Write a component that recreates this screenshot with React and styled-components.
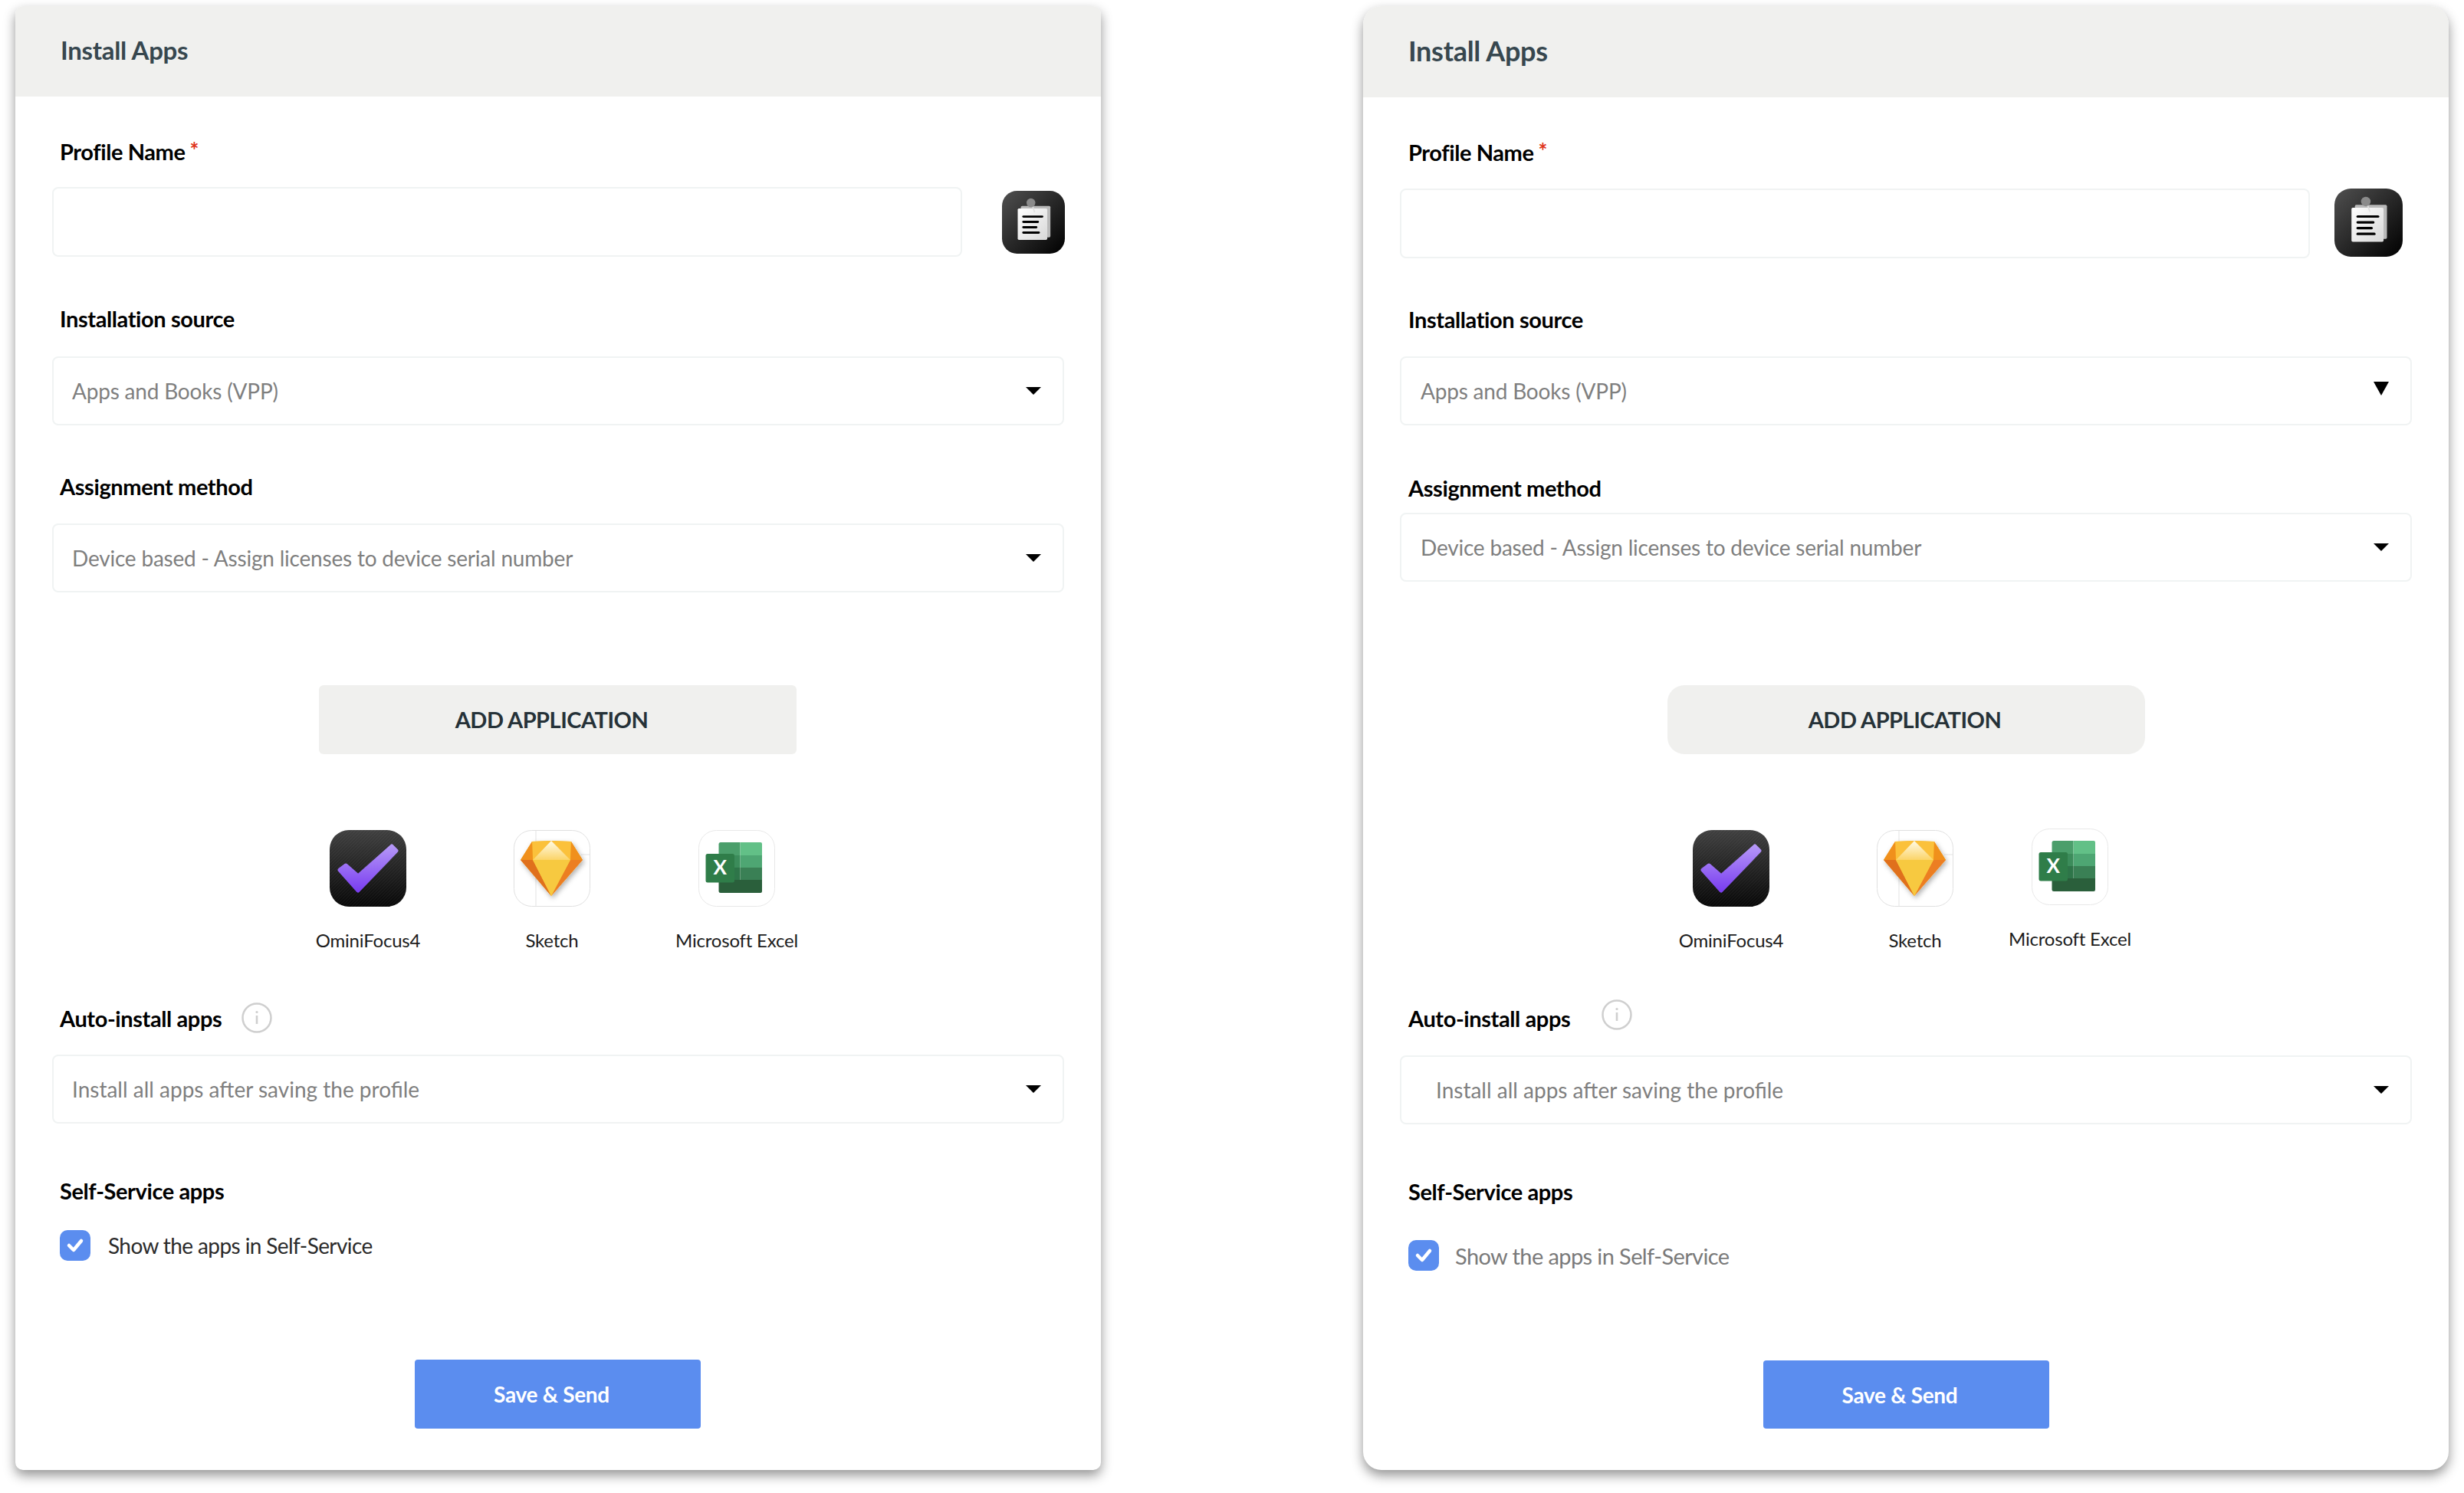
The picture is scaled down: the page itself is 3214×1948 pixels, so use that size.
import React from 'react'
import styled, {createGlobalStyle} from 'styled-components'

const GlobalStyle = createGlobalStyle`
html, body {
  margin: 0;
  padding: 0;
  background: #fff;
}
body {
  font-family: Lato, "Open Sans", sans-serif;
  -webkit-font-smoothing: antialiased;
}
`;

const Page = styled.div`
width: 3214px;
height: 1948px;
box-sizing: border-box;
padding: 8px 20px 0;
display: flex;
justify-content: space-between;
align-items: flex-start;
overflow: hidden;
`;
const Card = styled.section`
width: 1416px;
height: 1910px;
background: #fff;
border-radius: ${p => p.$radius}px;
box-shadow: rgba(0, 0, 0, 0.42) 0 7px 15px 0;
overflow: hidden;
display: flex;
flex-direction: column;
align-items: stretch;
`;
const Header = styled.header`
height: ${p => p.$height}px;
flex-shrink: 0;
background: #f0f0ee;
display: flex;
align-items: center;
padding-left: ${p => p.$left}px;
padding-bottom: 4px;
box-sizing: border-box;
`;
const Title = styled.h1`
margin: 0;
font-size: ${p => p.$size}px;
font-weight: 700;
color: #37474f;
letter-spacing: -0.3px;
`;
const Label = styled.div`
margin-top: ${p => p.$top}px;
margin-left: ${p => p.$left}px;
height: 34px;
line-height: 34px;
font-size: 29px;
font-weight: 700;
color: #000;
letter-spacing: -0.4px;
display: flex;
align-items: center;
`;
const Star = styled.span`
color: #e0341c;
margin-left: 6px;
margin-top: -6px;
font-size: 28px;
`;
const Row = styled.div`
margin-top: ${p => p.$top}px;
margin-left: ${p => p.$left}px;
display: flex;
align-items: center;
`;
const Field = styled.div`
width: ${p => p.$width}px;
height: ${p => p.$height}px;
box-sizing: border-box;
border: 2px solid #f0f3f3;
border-radius: 8px;
background: #fff;
display: flex;
align-items: center;
justify-content: space-between;
padding-left: ${p => p.$pad}px;
padding-right: ${p => p.$arrowRight}px;
font-size: 28px;
letter-spacing: ${p => p.$spacing ?? -0.2}px;
color: #7f7f7f;
flex-shrink: 0;
`;
const Arrow = styled.span`
width: 0;
height: 0;
margin-top: ${p => p.$shift}px;
border-left: ${p => p.$w / 2}px solid transparent;
border-right: ${p => p.$w / 2}px solid transparent;
border-top: ${p => p.$h}px solid #000;
`;
const ClipIcon = styled.svg`
width: ${p => p.$size}px;
height: ${p => p.$size}px;
margin-left: ${p => p.$left}px;
margin-top: ${p => p.$shift}px;
flex-shrink: 0;
`;
const AddButton = styled.button`
margin-top: ${p => p.$top}px;
margin-left: ${p => p.$left}px;
width: 623px;
height: 90px;
border: none;
background: #f0f0ee;
border-radius: ${p => p.$radius}px;
font-family: Lato, sans-serif;
font-size: 29px;
font-weight: 700;
color: #263238;
letter-spacing: -0.5px;
padding: 0 ${p => p.$shiftText}px 2px 0;
`;
const AppsRow = styled.div`
margin-top: ${p => p.$top}px;
margin-left: ${p => p.$left}px;
display: flex;
align-items: flex-start;
`;
const AppTile = styled.div`
width: 200px;
margin-left: ${p => p.$gap}px;
margin-top: ${p => p.$lift}px;
display: flex;
flex-direction: column;
align-items: center;
`;
const AppIcon = styled.svg`
width: 100px;
height: 100px;
display: block;
`;
const AppName = styled.div`
margin-top: ${p => p.$top}px;
height: 30px;
line-height: 30px;
font-size: 24px;
letter-spacing: -0.2px;
color: #1c1c1c;
white-space: nowrap;
`;
const InfoIcon = styled.svg`
width: 40px;
height: 40px;
margin-left: ${p => p.$left}px;
margin-top: ${p => p.$shift}px;
`;
const CheckRow = styled.div`
margin-top: ${p => p.$top}px;
margin-left: ${p => p.$left}px;
display: flex;
align-items: center;
`;
const CheckBox = styled.span`
width: 40px;
height: 40px;
border-radius: 10px;
background: #5b8def;
display: flex;
align-items: center;
justify-content: center;
`;
const CheckText = styled.span`
margin-left: ${p => p.$gap}px;
font-size: ${p => p.$size}px;
letter-spacing: ${p => p.$spacing}px;
color: ${p => p.$color};
`;
const SaveButton = styled.button`
margin-top: ${p => p.$top}px;
margin-left: ${p => p.$left}px;
width: 373px;
height: ${p => p.$height}px;
border: none;
border-radius: 4px;
background: #5b8def;
color: #fff;
font-family: Lato, sans-serif;
font-size: 28px;
font-weight: 700;
letter-spacing: -0.3px;
padding: 0 ${p => p.$shiftText}px 0 0;
`;

const ClipboardGlyph = ({size, left, shift, id}) => (
    <ClipIcon $size={size} $left={left} $shift={shift} viewBox='0 0 100 100'>
        <defs>
            <linearGradient id={id} x1='0' y1='0' x2='1' y2='1'>
                <stop offset='0' stopColor='#505050'/>
                <stop offset='1' stopColor='#000'/>
            </linearGradient>
            <linearGradient id={id + 'p'} x1='0' y1='0' x2='1' y2='1'>
                <stop offset='0' stopColor='#fff'/>
                <stop offset='1' stopColor='#d8d8d8'/>
            </linearGradient>
        </defs>
        <rect width='100' height='100' rx='24' fill={`url(#${id})`}/>
        <rect x='30' y='24' width='47' height='50' rx='2' fill='#b9b9b9'/>
        <rect x='25' y='28' width='47' height='50' rx='2' fill={`url(#${id + 'p'})`}/>
        <path d='M47 20L52 34' stroke='#e0e0e0' strokeWidth='2'/>
        <circle cx='46' cy='19' r='7' fill='#8b8b8b'/>
        <g stroke='#000' strokeWidth='3.6' strokeLinecap='round'>
            <path d='M34 41H64'/>
            <path d='M34 49.5H57'/>
            <path d='M34 58H54.5'/>
            <path d='M34 66.5H58.5'/>
        </g>
    </ClipIcon>
)

const OmniGlyph = ({id}) => (
    <AppIcon viewBox='0 0 100 100'>
        <defs>
            <linearGradient id={id} x1='0' y1='0' x2='0' y2='1'>
                <stop offset='0' stopColor='#3f3f3f'/>
                <stop offset='1' stopColor='#070707'/>
            </linearGradient>
            <linearGradient id={id + 'c'} x1='0' y1='0' x2='0' y2='1'>
                <stop offset='0' stopColor='#b597f7'/>
                <stop offset='1' stopColor='#7a3ef0'/>
            </linearGradient>
            <pattern id={id + 'h'} width='3' height='3' patternUnits='userSpaceOnUse' patternTransform='rotate(45)'>
                <rect width='1' height='3' fill='#ffffff' opacity='0.05'/>
            </pattern>
        </defs>
        <rect width='100' height='100' rx='25' fill={`url(#${id})`}/>
        <rect width='100' height='100' rx='25' fill={`url(#${id + 'h'})`}/>
        <polygon points='13,52 21,46 37,60 81,21 87,27 37,79' fill={`url(#${id + 'c'})`} stroke={`url(#${id + 'c'})`} strokeWidth='5' strokeLinejoin='round'/>
    </AppIcon>
)

const SketchGlyph = ({id}) => (
    <AppIcon viewBox='0 0 100 100'>
        <defs>
            <linearGradient id={id} x1='0' y1='0' x2='0' y2='1'>
                <stop offset='0' stopColor='#fffbe8'/>
                <stop offset='1' stopColor='#fbd468'/>
            </linearGradient>
            <filter id={id + 's'} x='-20%' y='-20%' width='140%' height='140%'>
                <feDropShadow dx='2' dy='3' stdDeviation='3' floodColor='#000' floodOpacity='0.3'/>
            </filter>
        </defs>
        <rect x='0.5' y='0.5' width='99' height='99' rx='23' fill='#fff' stroke='#e0e0e0'/>
        <path d='M29 1V99M88 32H99.5' stroke='#e3e3e3' strokeWidth='1'/>
        <g filter={`url(#${id + 's'})`}>
            <polygon points='24,15 49,14 75,15 90,39 49,86 9,39' fill='#f7b52e'/>
            <polygon points='24,15 49,14 25,39' fill='#fbc13a'/>
            <polygon points='75,15 49,14 74,39' fill='#fbc13a'/>
            <polygon points='24,15 9,39 25,39' fill='#f0901c'/>
            <polygon points='75,15 90,39 74,39' fill='#f0901c'/>
            <polygon points='49,14 25,39 74,39' fill={`url(#${id})`}/>
            <polygon points='9,39 25,39 49,86' fill='#e0701a'/>
            <polygon points='90,39 74,39 49,86' fill='#ec7e24'/>
            <polygon points='25,39 74,39 49,86' fill='#f7c93f'/>
        </g>
    </AppIcon>
)

const ExcelGlyph = () => (
    <AppIcon viewBox='0 0 100 100'>
        <rect x='0.5' y='0.5' width='99' height='99' rx='23' fill='#fff' stroke='#e8e8e8'/>
        <path d='M29 16H54.5V33H26.5V18.5A2.5 2.5 0 0 1 29 16Z' fill='#4b9e6b'/>
        <path d='M54.5 16H81A2 2 0 0 1 83 18V33H54.5Z' fill='#62c087'/>
        <rect x='26.5' y='33' width='28' height='16' fill='#3c8c5b'/>
        <rect x='54.5' y='33' width='28.5' height='16' fill='#4ea673'/>
        <rect x='26.5' y='49' width='28' height='16' fill='#2e7549'/>
        <rect x='54.5' y='49' width='28.5' height='16' fill='#3a8055'/>
        <path d='M26.5 65H83V80A2 2 0 0 1 81 82H29A2.5 2.5 0 0 1 26.5 79.5Z' fill='#2a5f3b'/>
        <rect x='9.5' y='31' width='37.5' height='37.5' rx='2.5' fill='#2f7d49'/>
        <text x='28.2' y='58' textAnchor='middle' fontFamily='Lato, sans-serif' fontWeight='700' fontSize='26' fill='#fff'>X</text>
    </AppIcon>
)

const InfoGlyph = ({left, shift}) => (
    <InfoIcon $left={left} $shift={shift} viewBox='0 0 40 40'>
        <circle cx='20' cy='20' r='18.5' fill='none' stroke='#cfcfcf' strokeWidth='2.5'/>
        <circle cx='20' cy='12.5' r='1.6' fill='#cfcfcf'/>
        <path d='M20 17V28' stroke='#cfcfcf' strokeWidth='2.6'/>
    </InfoIcon>
)

const panels = [
    {
        key: 'a', radius: 10, headerH: 118, titleLeft: 59, titleSize: 33, labelLeft: 58, fieldLeft: 48,
        fieldW: 1320, inputW: 1187, pad: 24, clip: {size: 82, left: 52, shift: 0},
        tops: {l1: 55, f1: 29, l2: 64, f2: 32, l3: 63, f3: 31, add: 121, apps: 99, l4: 70, f4: 30, l5: 71, chk: 34, save: 129},
        arrow2: {w: 20, h: 10, shift: 0, right: 28}, arrow3: {w: 20, h: 10, shift: 0, right: 28},
        autoPad: 24, addLeft: 396, addRadius: 6, addShift: 16,
        appsLeft: 360, tiles: [0, 40, 41], lift: 0, nameTop: 29,
        infoLeft: 26, infoShift: -2, chkGap: 23, chkSize: 28, chkSpacing: -0.6, chkColor: '#2b2b2b', chkLeft: 58, saveLeft: 521, saveH: 90, saveShift: 16,
    },
    {
        key: 'b', radius: 24, headerH: 119, titleLeft: 59, titleSize: 36, labelLeft: 59, fieldLeft: 48,
        fieldW: 1320, inputW: 1187, pad: 25, clip: {size: 89, left: 32, shift: -3},
        tops: {l1: 55, f1: 30, l2: 63, f2: 31, l3: 65, f3: 15, add: 135, apps: 99, l4: 70, f4: 31, l5: 71, chk: 46, save: 117},
        arrow2: {w: 20, h: 18, shift: -6, right: 28}, arrow3: {w: 20, h: 10, shift: 0, right: 28},
        autoPad: 45, addLeft: 397, addRadius: 22, addShift: 4,
        appsLeft: 380, tiles: [0, 40, 2], lift: -2, nameTop: 29,
        infoLeft: 41, infoShift: -10, chkGap: 21, chkSize: 29, chkSpacing: -0.6, chkColor: '#7a7a7a', chkLeft: 59, saveLeft: 522, saveH: 89, saveShift: 17,
    },
]

const Panel = ({v}) => (
    <Card $radius={v.radius}>
        <Header $height={v.headerH} $left={v.titleLeft}>
            <Title $size={v.titleSize}>Install Apps</Title>
        </Header>

        <Label $top={v.tops.l1} $left={v.labelLeft}>Profile Name<Star>*</Star></Label>
        <Row $top={v.tops.f1} $left={v.fieldLeft}>
            <Field $width={v.inputW} $height={91} $pad={v.pad} $arrowRight={0}/>
            <ClipboardGlyph id={'clip' + v.key} {...v.clip}/>
        </Row>

        <Label $top={v.tops.l2} $left={v.labelLeft}>Installation source</Label>
        <Row $top={v.tops.f2} $left={v.fieldLeft}>
            <Field $width={v.fieldW} $height={90} $pad={v.pad} $arrowRight={v.arrow2.right}>
                Apps and Books (VPP)
                <Arrow $w={v.arrow2.w} $h={v.arrow2.h} $shift={v.arrow2.shift}/>
            </Field>
        </Row>

        <Label $top={v.tops.l3} $left={v.labelLeft}>Assignment method</Label>
        <Row $top={v.tops.f3} $left={v.fieldLeft}>
            <Field $width={v.fieldW} $height={90} $pad={v.pad} $arrowRight={v.arrow3.right}>
                Device based - Assign licenses to device serial number
                <Arrow $w={v.arrow3.w} $h={v.arrow3.h} $shift={v.arrow3.shift}/>
            </Field>
        </Row>

        <AddButton $top={v.tops.add} $left={v.addLeft} $radius={v.addRadius} $shiftText={v.addShift}>ADD APPLICATION</AddButton>

        <AppsRow $top={v.tops.apps} $left={v.appsLeft}>
            <AppTile $gap={v.tiles[0]} $lift={0}>
                <OmniGlyph id={'omni' + v.key}/>
                <AppName $top={v.nameTop}>OminiFocus4</AppName>
            </AppTile>
            <AppTile $gap={v.tiles[1]} $lift={0}>
                <SketchGlyph id={'sketch' + v.key}/>
                <AppName $top={v.nameTop}>Sketch</AppName>
            </AppTile>
            <AppTile $gap={v.tiles[2]} $lift={v.lift}>
                <ExcelGlyph/>
                <AppName $top={v.nameTop}>Microsoft Excel</AppName>
            </AppTile>
        </AppsRow>

        <Label $top={v.tops.l4} $left={v.labelLeft}>
            Auto-install apps
            <InfoGlyph left={v.infoLeft} shift={v.infoShift}/>
        </Label>
        <Row $top={v.tops.f4} $left={v.fieldLeft}>
            <Field $width={v.fieldW} $height={90} $pad={v.autoPad} $arrowRight={28} $spacing={0}>
                Install all apps after saving the profile
                <Arrow $w={20} $h={10} $shift={0}/>
            </Field>
        </Row>

        <Label $top={v.tops.l5} $left={v.labelLeft}>Self-Service apps</Label>
        <CheckRow $top={v.tops.chk} $left={v.chkLeft}>
            <CheckBox>
                <svg width='24' height='20' viewBox='0 0 24 20'>
                    <path d='M4 10L10 16L20 4' fill='none' stroke='#fff' strokeWidth='4.5' strokeLinecap='round' strokeLinejoin='round'/>
                </svg>
            </CheckBox>
            <CheckText $gap={v.chkGap} $size={v.chkSize} $spacing={v.chkSpacing} $color={v.chkColor}>Show the apps in Self-Service</CheckText>
        </CheckRow>

        <SaveButton $top={v.tops.save} $left={v.saveLeft} $height={v.saveH} $shiftText={v.saveShift}>Save &amp; Send</SaveButton>
    </Card>
)

const App = () => (
    <Page>
        <GlobalStyle/>
        {panels.map(p => <Panel key={p.key} v={p}/>)}
    </Page>
)
export default App
